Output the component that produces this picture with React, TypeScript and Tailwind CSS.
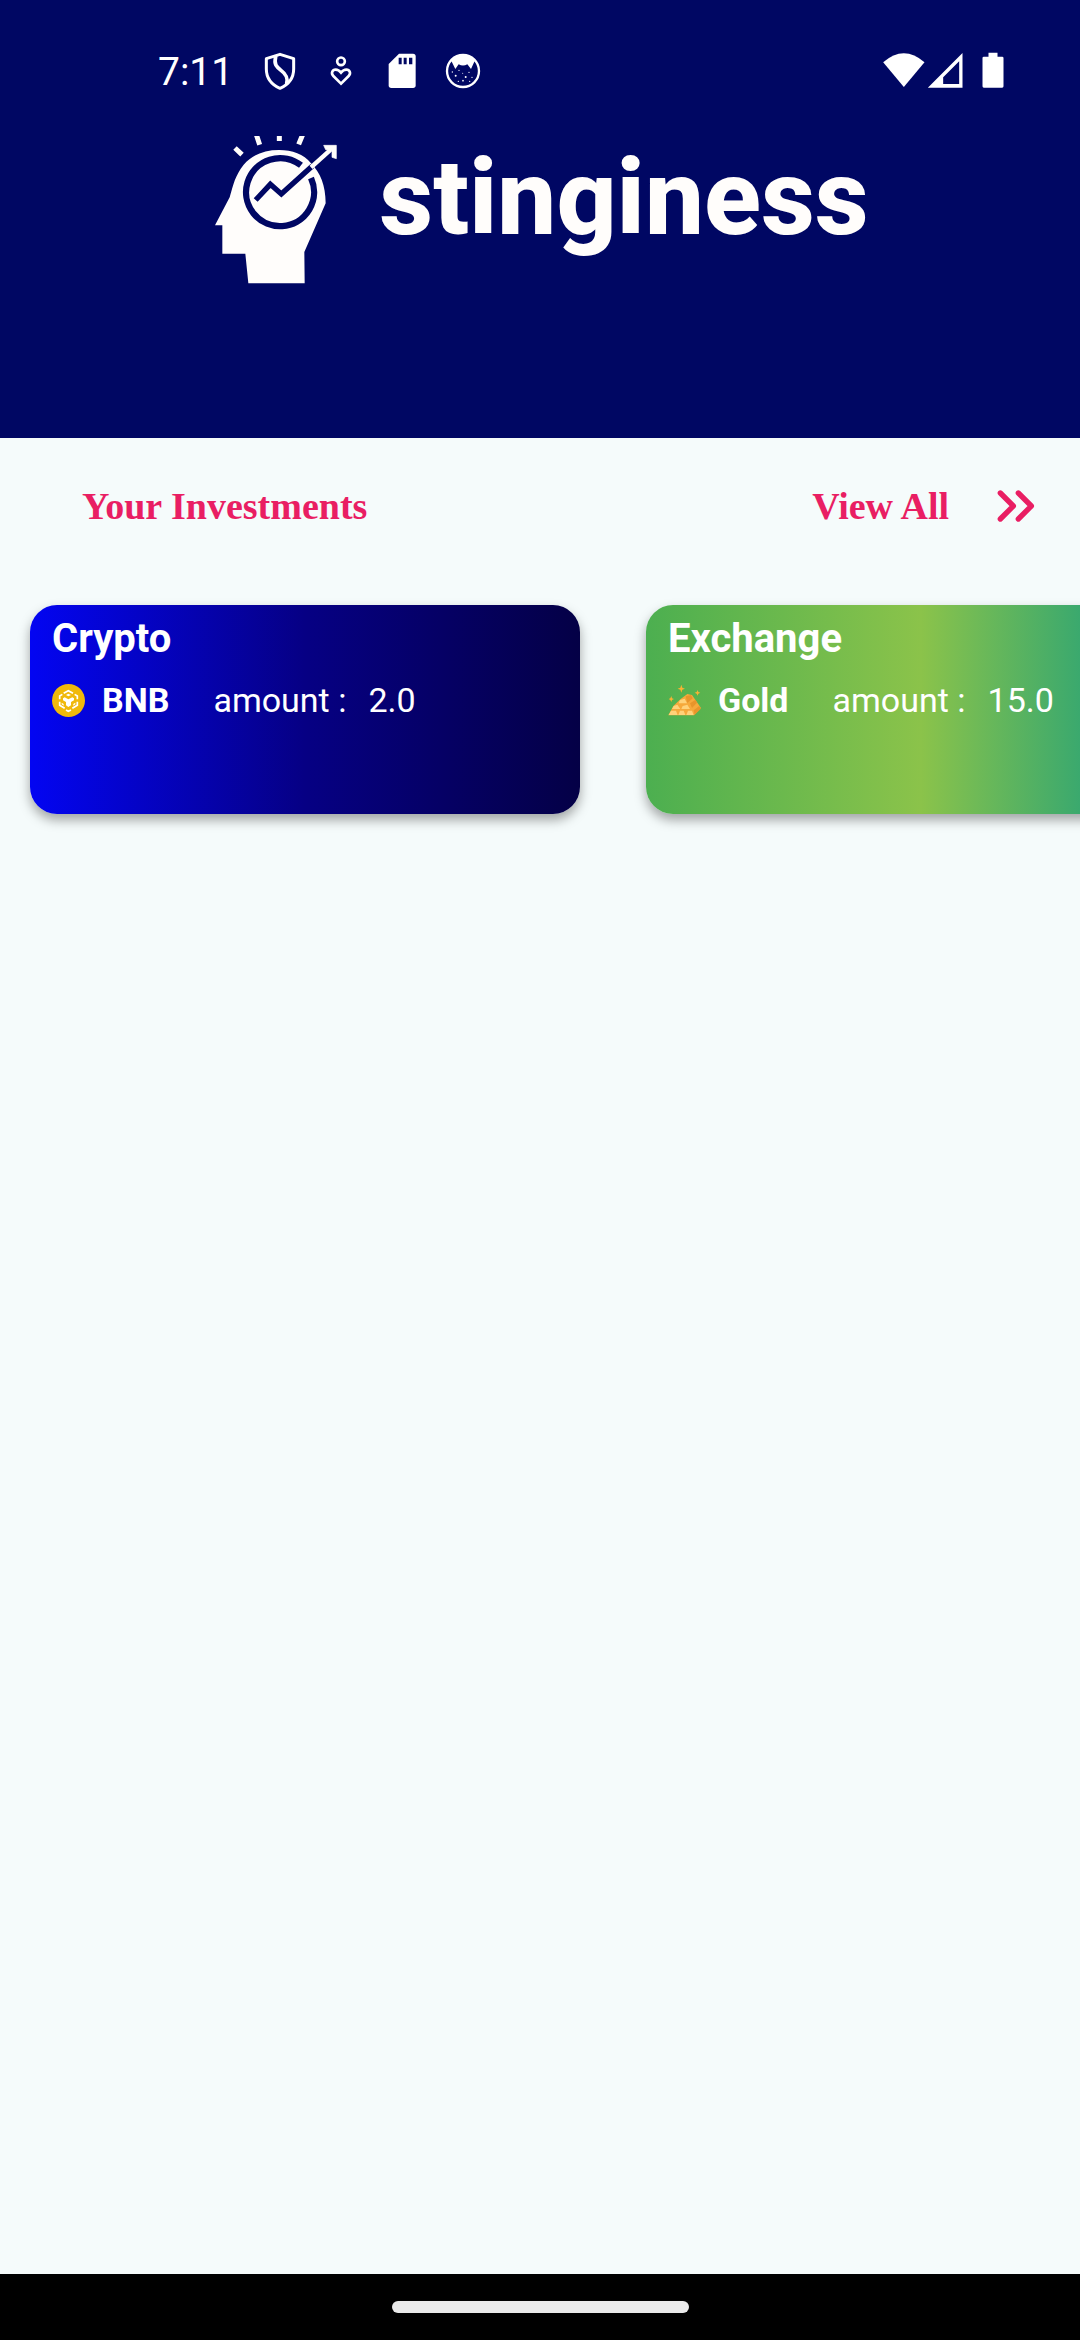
import React from "react";

function ShieldIcon() {
  return (
    <svg viewBox="358 64 120 120" className="size-10" fill="none" stroke="white" strokeWidth="9" strokeLinejoin="round" strokeLinecap="round">
      <path d="M418 74 L459 87 V118 C459 147 443 165 418 176 C393 165 377 147 377 118 V87 Z" />
      <path d="M405 82 C399 104 408 112 421 122 C437 134 442 144 438 161" strokeWidth="11" />
    </svg>
  );
}

function HeartPersonIcon() {
  return (
    <svg viewBox="541 64 120 120" className="size-10" fill="none" stroke="white" strokeWidth="8" strokeLinejoin="miter">
      <circle cx="601" cy="95" r="11.5" />
      <path d="M601 162 L578 139 C570 131 575 120 585 120 C593 120 597 124 601 129 C605 124 609 120 617 120 C627 120 632 131 624 139 Z" />
    </svg>
  );
}

function SdCardIcon() {
  return (
    <svg viewBox="724 64 120 120" className="size-10">
      <path d="M775 72 H817 Q825 72 825 80 V167 Q825 175 817 175 H752 Q744 175 744 167 V103 Z" fill="white" />
      <path d="M774 84 h9 v20 h-9z M789 84 h9 v20 h-9z M805 84 h10 v20 h-10z" fill="#000763" />
    </svg>
  );
}

function CatIcon() {
  return (
    <svg viewBox="907 64 120 120" className="size-10">
      <circle cx="967" cy="124" r="48" fill="none" stroke="white" strokeWidth="7" />
      <path d="M931 92 Q967 62 1003 92 L991 118 L980 104 Q967 111 954 104 L944 118 Z" fill="white" />
      <g fill="white">
        <circle cx="945" cy="138" r="3" />
        <circle cx="955" cy="122" r="2" />
        <circle cx="975" cy="142" r="3" />
        <circle cx="985" cy="128" r="2" />
        <circle cx="967" cy="153" r="2.5" />
        <circle cx="994" cy="143" r="2" />
        <circle cx="935" cy="127" r="2" />
        <circle cx="966" cy="131" r="1.5" />
        <circle cx="953" cy="155" r="2" />
        <circle cx="987" cy="155" r="2" />
      </g>
    </svg>
  );
}

function HeadLogo() {
  return (
    <svg viewBox="48 48 366 444" className="h-[148px] w-[122px] shrink-0" fill="none">
      <path
        d="M48 316 L92 232 C104 190 108 168 134 134 C160 104 196 90 240 90 C280 90 314 102 336 130 C364 158 380 196 380 250 L316 396 L317 490 H148 L139 401 H70 V316 Z"
        fill="#fffdfb"
      />
      <path d="M306 136 A102 102 0 1 0 336 174" stroke="#000763" strokeWidth="19" />
      <path d="M170 240 L214 193 L247 222 L340 138" stroke="#000763" strokeWidth="16" />
      <path d="M336 142 L396 88" stroke="#fffdfb" strokeWidth="13" />
      <path d="M374 76 H412 V116 L399 112 V91 L380 89 Z" fill="#fffdfb" stroke="#fffdfb" strokeWidth="2" />
      <path d="M108 84 L129 104 M172 44 L182 74 M241 44 V63 M311 44 L299 73" stroke="#fffdfb" strokeWidth="15" />
    </svg>
  );
}

function BnbIcon() {
  return (
    <svg viewBox="0 0 99 99" className="size-[33px] shrink-0">
      <circle cx="49.5" cy="49.5" r="49.5" fill="#f0b90b" />
      <g fill="none" stroke="white" strokeWidth="5">
        <path d="M35 28 L49 20 L63 28" />
        <path d="M23 46 V36 L31 31 M76 46 V36 L68 31" />
        <path d="M23 53 V64 L38 73 M76 53 V64 L61 73" />
        <path d="M42 78 L49 82 L57 78" />
      </g>
      <path d="M33 43 L38 40 L49 46 L61 40 L66 43 V49 L57 54 V64 L49 69 L42 64 V54 L33 49 Z" fill="white" />
      <path d="M42 33 L49 29 L57 33 L49 37 Z M29 56 L35 60 V65 L29 61 Z M70 56 L64 60 V65 L70 61 Z" fill="white" />
    </svg>
  );
}

function GoldIcon() {
  return (
    <svg viewBox="0 0 99 99" className="size-[33px] shrink-0">
      <path d="M1 94 L16 66 L38 45 L58 30 L72 33 L99 72 L78 94 Z" fill="#f6a93b" />
      <path d="M53 37 L69 33 L74 43 L58 57 Z M66 58 L83 47 L87 56 L72 72 Z M77 79 L94 66 L98 75 L80 92 Z" fill="#e8952b" />
      <path d="M36 48 L50 44 L57 58 H32 Z M17 66 L28 62 L37 75 H12 Z M44 66 L58 62 L66 75 H40 Z M2 93 L9 80 H24 L29 93 Z M31 93 L36 80 H47 L52 93 Z M55 93 L60 80 H72 L77 93 Z" fill="#ffd27a" />
      <path d="M40 2 L43 11 L51 14 L43 17 L40 26 L37 17 L29 14 L37 11 Z M89 18 L91 24 L97 26 L91 29 L89 35 L86 29 L80 26 L86 24 Z M10 36 L12 43 L18 45 L12 48 L10 54 L7 48 L2 45 L7 43 Z" fill="#f9b233" />
    </svg>
  );
}

function StatusBar() {
  return (
    <div className="flex h-[136px] items-start justify-between pt-[51px] pr-[76px] pl-[158px] text-white">
      <div className="flex h-10 items-center gap-[21px]">
        <time className="mr-3 w-[69px] pt-0.5 font-[Roboto,sans-serif] text-[39px] leading-[44px] whitespace-nowrap">7:11</time>
        <ShieldIcon />
        <HeartPersonIcon />
        <SdCardIcon />
        <CatIcon />
      </div>
      <svg viewBox="68 64 362 120" className="h-10 w-[121px]" fill="white">
        <path d="M68 98 Q130 44 192 98 L130 172 Z" />
        <path fillRule="evenodd" d="M202 174 L306 70 V174 Z M248 163 H296 V95 L248 143 Z" />
        <path d="M384 69 H411 V81 H425 Q429 81 429 85 V170 Q429 174 425 174 H370 Q366 174 366 170 V85 Q366 81 370 81 H384 Z" />
      </svg>
    </div>
  );
}

type Investment = {
  kind: string;
  name: string;
  amount: string;
  icon: React.ReactNode;
  background: string;
};

const investments: Investment[] = [
  {
    kind: "Crypto",
    name: "BNB",
    amount: "2.0",
    icon: <BnbIcon />,
    background: "bg-linear-to-r/srgb from-[#0305f2] via-[#060084] to-[#040046]",
  },
  {
    kind: "Exchange",
    name: "Gold",
    amount: "15.0",
    icon: <GoldIcon />,
    background: "bg-linear-to-r/srgb from-[#4caf50] via-[#8bc34a] to-[#009688]",
  },
];

function InvestmentCard({ item }: { item: Investment }) {
  return (
    <li
      className={`h-[209px] w-[550px] shrink-0 rounded-[27px] px-[22px] pt-3 font-[Roboto,sans-serif] whitespace-nowrap text-white shadow-[0_6px_12px_rgba(0,0,0,0.35)] ${item.background}`}
    >
      <h3 className="text-[40px] leading-[44px] font-bold">{item.kind}</h3>
      <div className="mt-[17px] flex items-center text-[34px] leading-[44px]">
        {item.icon}
        <span className="ml-[17px] font-bold">{item.name}</span>
        <span className="ml-11">amount :</span>
        <span className="ml-[22px]">{item.amount}</span>
      </div>
    </li>
  );
}

export default function App() {
  return (
    <div className="flex min-h-screen flex-col overflow-hidden bg-[#f5fbfb]">
      <header className="h-[438px] bg-[#000763]">
        <StatusBar />
        <div className="flex items-start justify-center gap-[42px] pl-1">
          <HeadLogo />
          <h1 className="font-[Roboto,sans-serif] text-[105px] leading-[126px] font-extrabold whitespace-nowrap text-[#fffdfb]">stinginess</h1>
        </div>
      </header>
      <main className="flex-1">
        <div className="flex h-[136px] items-center justify-between pr-[45px] pl-[82px] font-['Liberation_Serif',serif] text-[38px] font-bold text-[#e91e63]">
          <h2>Your Investments</h2>
          <button type="button" className="flex items-center gap-12">
            <span>View All</span>
            <svg viewBox="645 60 114 96" className="h-8 w-[38px]" fill="none" stroke="currentColor" strokeWidth="16" strokeLinecap="round" strokeLinejoin="round">
              <path d="M655 69 L694 108 L655 147 M709 69 L748 108 L709 147" />
            </svg>
          </button>
        </div>
        <ul className="flex gap-[66px] overflow-hidden pt-[31px] pb-8 pl-[30px]">
          {investments.map((item) => (
            <InvestmentCard key={item.kind} item={item} />
          ))}
        </ul>
      </main>
      <footer className="flex h-[66px] items-center justify-center bg-black">
        <div className="h-3 w-[297px] rounded-full bg-[#eaeaea]" />
      </footer>
    </div>
  );
}
